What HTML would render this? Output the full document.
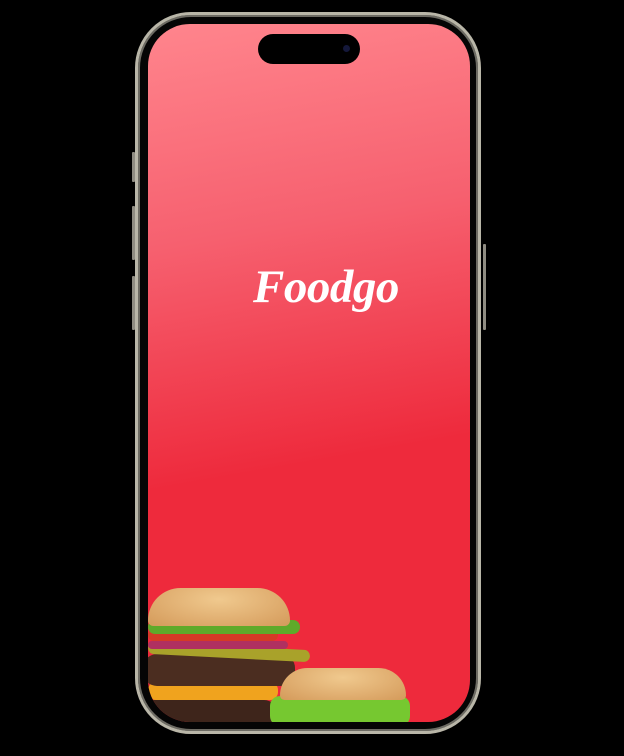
<!DOCTYPE html>
<html><head><meta charset="utf-8"><style>
html,body{margin:0;padding:0;background:#000;width:624px;height:756px;overflow:hidden;position:relative}
.frame{position:absolute;left:135px;top:12px;width:346px;height:722px;border-radius:56px;border:3px solid #b9b6a8;box-sizing:border-box;background:#050505;box-shadow:inset 0 0 0 2px #6d6b63}
.btn{position:absolute;background:#8f8c82;width:3px;border-radius:1px}
.screen{position:absolute;left:148px;top:24px;width:322px;height:698px;border-radius:42px;overflow:hidden;background:linear-gradient(170deg,#ff858d 0%,#f6606f 30%,#ee2a3c 62%,#ee2a3c 100%)}
.island{position:absolute;left:110px;top:10px;width:102px;height:30px;border-radius:15px;background:#000}
.cam{position:absolute;right:10px;top:11px;width:7px;height:7px;border-radius:50%;background:#14183a}
.title{position:absolute;left:105px;top:236px;color:#fff;font:bold italic 47px "Liberation Serif",serif;letter-spacing:-0.5px;white-space:nowrap}
.b{position:absolute}
</style></head><body>
<div class="btn" style="left:132px;top:152px;height:30px"></div>
<div class="btn" style="left:132px;top:206px;height:54px"></div>
<div class="btn" style="left:132px;top:276px;height:54px"></div>
<div class="btn" style="left:483px;top:244px;height:86px"></div>
<div class="frame"></div>
<div class="screen">
<div class="island"><div class="cam"></div></div>
<div class="title">Foodgo</div>
<div class="b" style="left:-10px;top:676px;width:140px;height:30px;background:#3e251b;border-radius:14px"></div>
<div class="b" style="left:0px;top:658px;width:130px;height:18px;background:#f0a31e;border-radius:8px"></div>
<div class="b" style="left:-5px;top:630px;width:152px;height:32px;background:#4b2d20;border-radius:14px"></div>
<div class="b" style="left:0px;top:622px;width:162px;height:12px;background:#a9a22a;border-radius:6px;transform:rotate(3deg)"></div>
<div class="b" style="left:0px;top:617px;width:140px;height:8px;background:#b03060;border-radius:4px"></div>
<div class="b" style="left:0px;top:605px;width:130px;height:12px;background:#d53a26;border-radius:6px"></div>
<div class="b" style="left:0px;top:596px;width:152px;height:14px;background:#5faa2a;border-radius:7px"></div>
<div class="b" style="left:0px;top:564px;width:142px;height:38px;background:radial-gradient(ellipse at 50% 30%,#f0c98e,#d49a5a);border-radius:60px 60px 10px 10px"></div>
<div class="b" style="left:122px;top:672px;width:140px;height:30px;background:#76c830;border-radius:10px"></div>
<div class="b" style="left:132px;top:644px;width:126px;height:32px;background:radial-gradient(ellipse at 50% 30%,#f0c98e,#d49a5a);border-radius:60px 60px 10px 10px"></div>
</div>
</body></html>
